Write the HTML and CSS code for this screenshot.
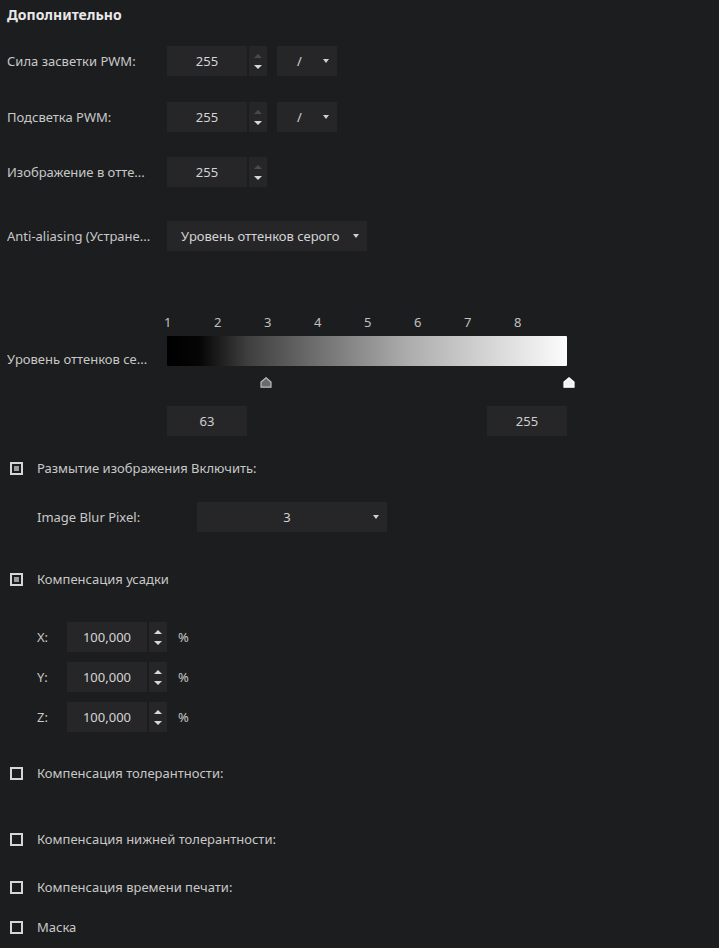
FILE: index.html
```html
<!DOCTYPE html>
<html lang="ru">
<head>
<meta charset="utf-8">
<link rel="stylesheet" href="styles.css">
</head>
<body>
<div class="panel">
  <div class="title">Дополнительно</div>

  <div class="row r1">
    <div class="label">Сила засветки PWM:</div>
    <div class="spin">
      <div class="field">255</div>
      <div class="arrows"><span class="up dim"></span><span class="down"></span></div>
    </div>
    <div class="combo small"><span class="ctext">/</span><span class="caret"></span></div>
  </div>

  <div class="row r2">
    <div class="label">Подсветка PWM:</div>
    <div class="spin">
      <div class="field">255</div>
      <div class="arrows"><span class="up dim"></span><span class="down"></span></div>
    </div>
    <div class="combo small"><span class="ctext">/</span><span class="caret"></span></div>
  </div>

  <div class="row r3">
    <div class="label">Изображение в отте...</div>
    <div class="spin">
      <div class="field">255</div>
      <div class="arrows"><span class="up dim"></span><span class="down"></span></div>
    </div>
  </div>

  <div class="row r4">
    <div class="label">Anti-aliasing (Устране...</div>
    <div class="combo wide"><span class="ctext">Уровень оттенков серого</span><span class="caret"></span></div>
  </div>

  <div class="levels">
    <div class="ticks">
      <span>1</span><span>2</span><span>3</span><span>4</span><span>5</span><span>6</span><span>7</span><span>8</span>
    </div>
    <div class="grad-row">
      <div class="label gl">Уровень оттенков се...</div>
      <div class="slider">
        <div class="gradient"></div>
        <svg class="handle h1" width="12" height="11" viewBox="0 0 12 11"><path d="M6 0.8 L11 5 L11 10.2 L1 10.2 L1 5 Z" fill="#6b6b6d" stroke="#bdbdbd" stroke-width="1.2"/></svg>
        <svg class="handle h2" width="12" height="11" viewBox="0 0 12 11"><path d="M6 0.8 L11 5 L11 10.2 L1 10.2 L1 5 Z" fill="#f2f2f2" stroke="#ffffff" stroke-width="1.2"/></svg>
      </div>
    </div>
    <div class="vals">
      <div class="vbox">63</div>
      <div class="vbox">255</div>
    </div>
  </div>

  <div class="check r-blur"><span class="cb on"></span><span class="ctxt">Размытие изображения Включить:</span></div>
  <div class="row sub r-blurpx">
    <div class="label">Image Blur Pixel:</div>
    <div class="combo blur"><span class="ctext">3</span><span class="caret"></span></div>
  </div>

  <div class="check r-shrink"><span class="cb on"></span><span class="ctxt">Компенсация усадки</span></div>
  <div class="row sub r-x">
    <div class="label xl">X:</div>
    <div class="spin">
      <div class="field">100,000</div>
      <div class="arrows"><span class="up"></span><span class="down"></span></div>
    </div>
    <div class="pct">%</div>
  </div>
  <div class="row sub r-y">
    <div class="label xl">Y:</div>
    <div class="spin">
      <div class="field">100,000</div>
      <div class="arrows"><span class="up"></span><span class="down"></span></div>
    </div>
    <div class="pct">%</div>
  </div>
  <div class="row sub r-z">
    <div class="label xl">Z:</div>
    <div class="spin">
      <div class="field">100,000</div>
      <div class="arrows"><span class="up"></span><span class="down"></span></div>
    </div>
    <div class="pct">%</div>
  </div>

  <div class="check r-tol"><span class="cb"></span><span class="ctxt">Компенсация толерантности:</span></div>
  <div class="check r-low"><span class="cb"></span><span class="ctxt">Компенсация нижней толерантности:</span></div>
  <div class="check r-time"><span class="cb"></span><span class="ctxt">Компенсация времени печати:</span></div>
  <div class="check r-mask"><span class="cb"></span><span class="ctxt">Маска</span></div>
</div>
</body>
</html>
```

FILE: styles.css
```css
html, body {
  margin: 0;
  padding: 0;
  background: #1c1d1f;
}
body {
  font-family: "Noto Sans", "Open Sans", sans-serif;
  font-size: 13px;
  color: #c8c8c8;
  width: 719px;
  height: 948px;
  overflow: hidden;
}
.panel {
  padding: 0 7px;
  display: flex;
  flex-direction: column;
}
.title {
  height: 30px;
  line-height: 30px;
  font-weight: bold;
  font-size: 14px;
  color: #e8e8e8;
}
.row {
  height: 30px;
  display: flex;
  align-items: center;
}
.label {
  width: 160px;
  white-space: nowrap;
  overflow: hidden;
}
.r1 { margin-top: 16px; }
.r2 { margin-top: 26px; }
.r3 { margin-top: 25px; }
.r4 { margin-top: 34px; }

.spin {
  display: flex;
  height: 30px;
}
.field {
  width: 80px;
  height: 30px;
  background: #262628;
  color: #d4d4d4;
  display: flex;
  align-items: center;
  justify-content: center;
}
.arrows {
  width: 18px;
  margin-left: 2px;
  background: #262628;
  display: flex;
  flex-direction: column;
  align-items: center;
  justify-content: center;
  gap: 7px;
}
.up, .down {
  width: 0;
  height: 0;
  border-left: 4px solid transparent;
  border-right: 4px solid transparent;
}
.up { border-bottom: 4px solid #d8d8d8; }
.up.dim { border-bottom-color: #4a4a4c; }
.down { border-top: 4px solid #d8d8d8; }

.combo {
  height: 30px;
  background: #262628;
  display: flex;
  align-items: center;
  position: relative;
  color: #d4d4d4;
}
.caret {
  position: absolute;
  right: 8px;
  top: 13px;
  width: 0;
  height: 0;
  border-left: 3.5px solid transparent;
  border-right: 3.5px solid transparent;
  border-top: 4px solid #cfcfcf;
}
.combo.small {
  width: 60px;
  margin-left: 10px;
}
.combo.small .ctext { margin-left: 20px; }
.combo.wide { width: 200px; }
.combo.wide .ctext { margin-left: 14px; }
.combo.blur {
  width: 190px;
  justify-content: center;
}
.combo.blur .ctext { margin-right: 10px; }

.levels {
  display: flex;
  flex-direction: column;
}
.ticks {
  margin-top: 63px;
  margin-left: 157px;
  height: 16px;
  line-height: 16px;
  display: flex;
}
.ticks span {
  width: 50px;
  color: #c0c0c0;
}
.grad-row {
  display: flex;
  margin-top: 6px;
}
.gl {
  align-self: flex-start;
  margin-top: 14px;
}
.slider {
  position: relative;
  width: 400px;
  height: 56px;
}
.gradient {
  height: 30px;
  background: linear-gradient(to right, #000 0%, #050505 8%, #3e3e3e 20%, #767676 40%, #acacac 60%, #d4d4d4 80%, #fcfcfc 100%);
  border-radius: 1px;
}
.handle {
  position: absolute;
  top: 41px;
}
.h1 { left: 93px; }
.h2 { left: 396px; }
.vals {
  margin-left: 160px;
  width: 400px;
  display: flex;
  justify-content: space-between;
  margin-top: 14px;
}
.vbox {
  width: 80px;
  height: 30px;
  background: #262628;
  color: #cfcfcf;
  display: flex;
  align-items: center;
  justify-content: center;
}

.check {
  height: 20px;
  display: flex;
  align-items: center;
}
.cb {
  width: 9px;
  height: 9px;
  border: 2px solid #d6d6d6;
  margin-left: 3px;
  margin-right: 14px;
  display: flex;
  align-items: center;
  justify-content: center;
}
.cb.on::after {
  content: "";
  width: 5px;
  height: 5px;
  background: #9a9a9a;
}
.r-blur { margin-top: 22px; }
.sub { padding-left: 30px; }
.r-blurpx { margin-top: 24px; }
.r-shrink { margin-top: 37px; }
.r-x { margin-top: 33px; }
.r-y { margin-top: 10px; }
.r-z { margin-top: 10px; }
.xl { width: 30px; }
.pct { margin-left: 11px; }
.r-tol { margin-top: 31px; }
.r-low { margin-top: 46px; }
.r-time { margin-top: 28px; }
.r-mask { margin-top: 20px; }
```
